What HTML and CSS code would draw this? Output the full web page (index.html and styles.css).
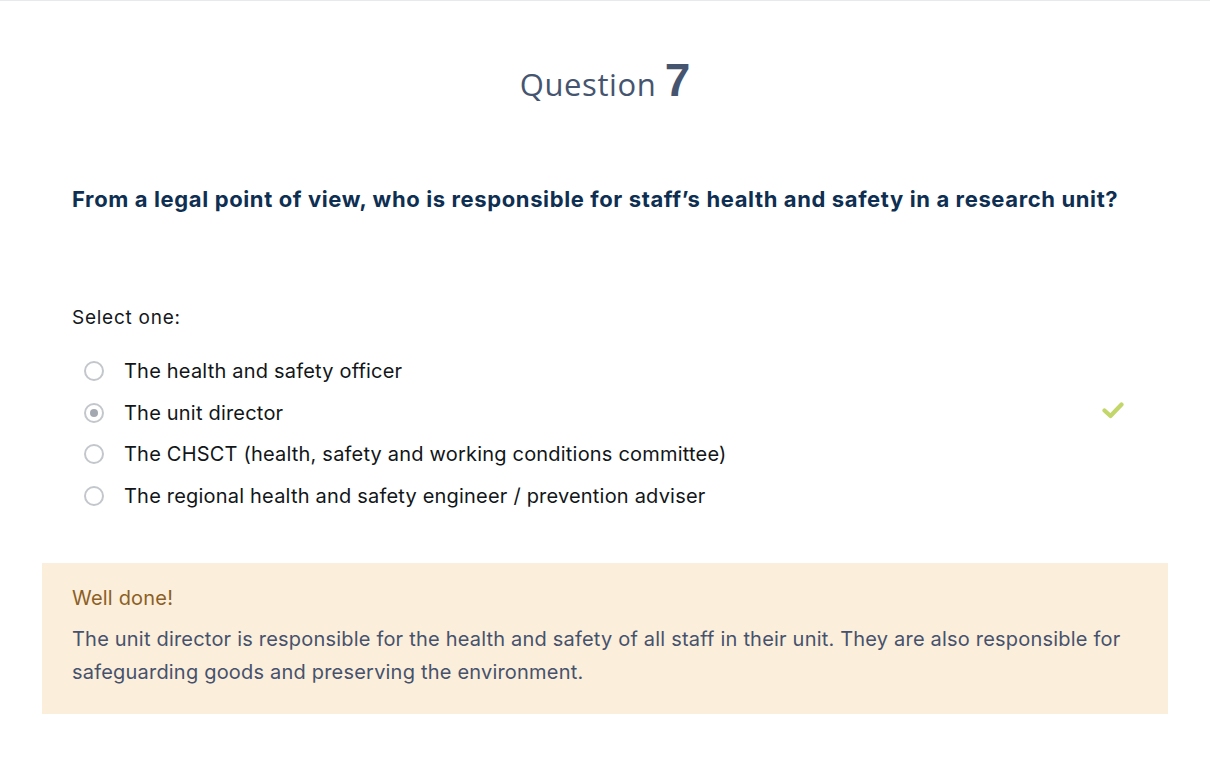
FILE: index.html
```html
<!DOCTYPE html>
<html lang="en">
<head>
<meta charset="utf-8">
<title>Question 7</title>
<link rel="stylesheet" href="styles.css">
</head>
<body>
<div class="topline"></div>
<main class="quiz">
  <h1 class="qhead"><span class="qlabel">Question</span> <span class="qnum">7</span></h1>
  <div class="inner">
    <p class="qtext">From a legal point of view, who is responsible for staff’s health and safety in a research unit?</p>
    <p class="prompt">Select one:</p>
    <ul class="options">
      <li class="option"><span class="radio"></span><span class="label">The health and safety officer</span></li>
      <li class="option selected"><span class="radio"></span><span class="label">The unit director</span>
        <svg class="tick" width="22" height="18" viewBox="0 0 22 18"><path d="M2.5 9.5 L8.5 15 L19.5 3.5" fill="none" stroke="#c2d66a" stroke-width="4.2" stroke-linecap="round" stroke-linejoin="round"/></svg>
      </li>
      <li class="option"><span class="radio"></span><span class="label">The CHSCT (health, safety and working conditions committee)</span></li>
      <li class="option"><span class="radio"></span><span class="label">The regional health and safety engineer / prevention adviser</span></li>
    </ul>
  </div>
  <section class="feedback">
    <p class="fb-title">Well done!</p>
    <p class="fb-text">The unit director is responsible for the health and safety of all staff in their unit. They are also responsible for safeguarding goods and preserving the environment.</p>
  </section>
</main>
</body>
</html>
```

FILE: styles.css
```css
* { box-sizing: border-box; }
html, body { margin: 0; padding: 0; background: #fff; }
body { font-family: Inter, "Noto Sans", "Liberation Sans", sans-serif; color: #111; }
.topline { height: 1px; background: #e6eaea; }
.quiz { padding: 0 42px; }
.qhead { margin: 0; padding-top: 51px; text-align: center; color: #46556f; font-weight: 400; line-height: 56px; font-family: "Open Sans", "Noto Sans", sans-serif; }
.qlabel { font-size: 31px; letter-spacing: 0.6px; }
.qnum { font-size: 46px; font-weight: 700; font-family: "Liberation Sans", sans-serif; }
.inner { padding: 0 30px; }
.qtext { margin: 72px 0 0; font-size: 22px; font-weight: 700; color: #0e2f52; letter-spacing: 0.62px; line-height: 30px; }
.prompt { margin: 91px 0 0; font-size: 19px; line-height: 26px; color: #14181c; letter-spacing: 0.75px; }
.options { list-style: none; margin: 19px 0 0; padding: 0 0 0 12px; }
.option { display: flex; align-items: center; height: 41.7px; font-size: 20px; letter-spacing: 0.2px; color: #121619; }
.radio { width: 20px; height: 20px; border-radius: 50%; border: 2px solid #c3c7cc; margin-right: 20px; flex: none; display: flex; align-items: center; justify-content: center; }
.selected .radio::after { content: ""; width: 8px; height: 8px; border-radius: 50%; background: #a4a8b0; }
.label { flex: 1; }
.tick { margin-right: 14px; margin-top: -6px; }
.feedback { margin-top: 46px; background: #fbeedb; padding: 22px 30px 25px; }
.fb-title { margin: 0; font-size: 20px; letter-spacing: 0.2px; color: #8b5f26; line-height: 26px; }
.fb-text { margin: 12px 0 0; font-size: 20px; letter-spacing: 0.2px; color: #46526d; line-height: 33px; }
```
